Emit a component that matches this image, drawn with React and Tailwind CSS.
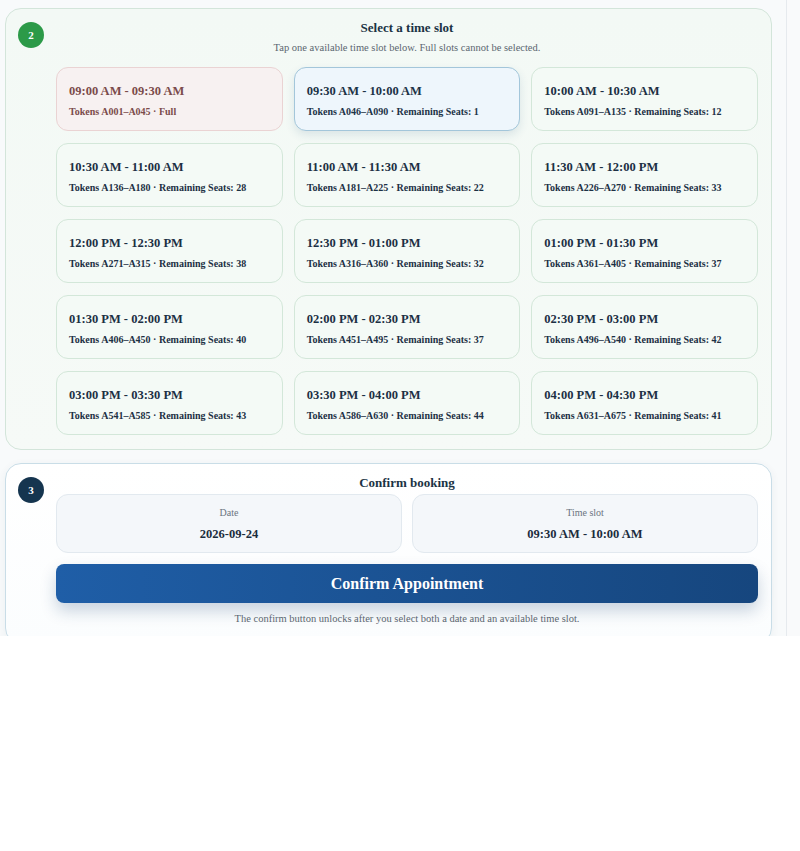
import React from "react";

const slots = [
  { time: "09:00 AM - 09:30 AM", tokens: "A001–A045", seats: 0 },
  { time: "09:30 AM - 10:00 AM", tokens: "A046–A090", seats: 1 },
  { time: "10:00 AM - 10:30 AM", tokens: "A091–A135", seats: 12 },
  { time: "10:30 AM - 11:00 AM", tokens: "A136–A180", seats: 28 },
  { time: "11:00 AM - 11:30 AM", tokens: "A181–A225", seats: 22 },
  { time: "11:30 AM - 12:00 PM", tokens: "A226–A270", seats: 33 },
  { time: "12:00 PM - 12:30 PM", tokens: "A271–A315", seats: 38 },
  { time: "12:30 PM - 01:00 PM", tokens: "A316–A360", seats: 32 },
  { time: "01:00 PM - 01:30 PM", tokens: "A361–A405", seats: 37 },
  { time: "01:30 PM - 02:00 PM", tokens: "A406–A450", seats: 40 },
  { time: "02:00 PM - 02:30 PM", tokens: "A451–A495", seats: 37 },
  { time: "02:30 PM - 03:00 PM", tokens: "A496–A540", seats: 42 },
  { time: "03:00 PM - 03:30 PM", tokens: "A541–A585", seats: 43 },
  { time: "03:30 PM - 04:00 PM", tokens: "A586–A630", seats: 44 },
  { time: "04:00 PM - 04:30 PM", tokens: "A631–A675", seats: 41 },
];

const selected = "09:30 AM - 10:00 AM";

const SlotCard = ({ slot }) => {
  const full = slot.seats === 0;
  const isSel = slot.time === selected;

  let cls =
    "h-16 rounded-xl border pl-3 pr-3 pt-1 flex flex-col justify-center text-left";
  if (full) cls += " bg-[#f7f1f1] border-[#ead3d3] text-[#7b4b4b]";
  else if (isSel)
    cls +=
      " bg-[#eef6fc] border-[#a3c6da] text-[#1c3347] shadow-[0_4px_10px_rgba(30,80,120,0.12)]";
  else cls += " bg-[#f4faf6] border-[#d3e7d9] text-[#1c3044]";

  return (
    <button className={cls}>
      <span className="text-[12.5px] font-bold leading-4">{slot.time}</span>
      <span className="text-[10px] font-bold leading-4 mt-[5px]">
        Tokens {slot.tokens} ·{" "}
        {full ? "Full" : `Remaining Seats: ${slot.seats}`}
      </span>
    </button>
  );
};

const App = () => {
  return (
    <div
      className="flex w-full h-[851px] bg-white"
      style={{ fontFamily: '"Liberation Serif", "Times New Roman", serif' }}
    >
      <div className="flex h-[636px] w-full">
        <div className="w-[787px] h-full overflow-hidden bg-[#f8fafb] border-r border-[#e6eaee] pt-2 pl-[5px] pr-[14px] flex flex-col gap-[13px]">
          {/* step 2 */}
          <section className="shrink-0 flex rounded-2xl border border-[#d3e5da] bg-gradient-to-b from-[#f3f9f5] to-[#f6faf7] pl-3 pr-[13px] pt-[11px] pb-[14px] gap-3">
            <div className="shrink-0 w-[26px] h-[26px] rounded-full bg-[#2c9a48] text-white text-[11px] font-bold flex items-center justify-center mt-[2px]">
              2
            </div>
            <div className="flex-1">
              <h2 className="text-center text-[13px] font-bold text-[#1b3344] leading-4">
                Select a time slot
              </h2>
              <p className="text-center text-[10.5px] text-[#5b6670] leading-4 mt-[4px]">
                Tap one available time slot below. Full slots cannot be
                selected.
              </p>
              <div className="grid grid-cols-3 gap-x-[11px] gap-y-3 mt-[11px]">
                {slots.map((s) => (
                  <SlotCard key={s.time} slot={s} />
                ))}
              </div>
            </div>
          </section>

          {/* step 3 */}
          <section className="shrink-0 flex rounded-2xl border border-[#c9dde7] bg-gradient-to-b from-white to-[#fbfdfe] pl-3 pr-[13px] pt-[11px] pb-4 gap-3 shadow-[0_2px_8px_rgba(20,60,90,0.06)]">
            <div className="shrink-0 w-[26px] h-[26px] rounded-full bg-[#15354f] text-white text-[11px] font-bold flex items-center justify-center mt-[2px]">
              3
            </div>
            <div className="flex-1">
              <h2 className="text-center text-[13px] font-bold text-[#1b3344] leading-4">
                Confirm booking
              </h2>
              <div className="grid grid-cols-2 gap-[10px] mt-[3px]">
                <div className="h-[59px] rounded-xl border border-[#e2e9ef] bg-[#f4f7fa] flex flex-col items-center justify-center">
                  <span className="text-[10px] text-[#6b7480] leading-4">
                    Date
                  </span>
                  <span className="text-[12.5px] font-bold text-[#1b2d3d] leading-4 mt-[5px]">
                    2026-09-24
                  </span>
                </div>
                <div className="h-[59px] rounded-xl border border-[#e2e9ef] bg-[#f4f7fa] flex flex-col items-center justify-center">
                  <span className="text-[10px] text-[#6b7480] leading-4">
                    Time slot
                  </span>
                  <span className="text-[12.5px] font-bold text-[#1b2d3d] leading-4 mt-[5px]">
                    09:30 AM - 10:00 AM
                  </span>
                </div>
              </div>
              <button className="w-full h-[39px] mt-[11px] rounded-lg bg-gradient-to-r from-[#1f5ea7] to-[#16467e] text-white text-[16px] font-bold shadow-[0_8px_16px_rgba(20,60,110,0.22)]">
                Confirm Appointment
              </button>
              <p className="text-center text-[10.5px] text-[#5b6670] leading-4 mt-[8px]">
                The confirm button unlocks after you select both a date and an
                available time slot.
              </p>
            </div>
          </section>
        </div>
        <div className="flex-1 h-full bg-[#f9fafb]" />
      </div>
    </div>
  );
};

export default App;
